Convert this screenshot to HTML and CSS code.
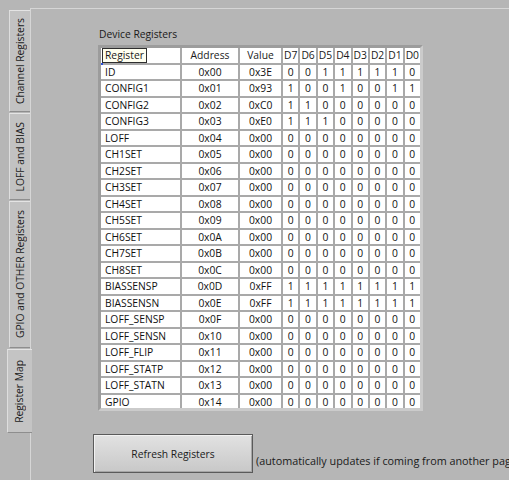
FILE: index.html
```html
<!DOCTYPE html>
<html>
<head>
<meta charset="utf-8">
<link rel="stylesheet" href="styles.css">
</head>
<body>
<div class="app">
  <div class="tabs">
    <div class="tab t1"><span>Channel Registers</span></div>
    <div class="tab t2"><span>LOFF and BIAS</span></div>
    <div class="tab t3"><span>GPIO and OTHER Registers</span></div>
    <div class="tab sel"><span>Register Map</span></div>
  </div>
  <div class="panel">
    <div class="regs">
      <div class="caption">Device Registers</div>
      <div class="frame">
        <div class="grid">
          <div class="c h name first"><span class="edit">Register</span><i class="dot"></i></div><div class="c h">Address</div><div class="c h">Value</div><div class="c h">D7</div><div class="c h">D6</div><div class="c h">D5</div><div class="c h">D4</div><div class="c h">D3</div><div class="c h">D2</div><div class="c h">D1</div><div class="c h">D0</div>
          <div class="c name">ID</div><div class="c">0x00</div><div class="c">0x3E</div><div class="c">0</div><div class="c">0</div><div class="c">1</div><div class="c">1</div><div class="c">1</div><div class="c">1</div><div class="c">1</div><div class="c">0</div>
          <div class="c name">CONFIG1</div><div class="c">0x01</div><div class="c">0x93</div><div class="c">1</div><div class="c">0</div><div class="c">0</div><div class="c">1</div><div class="c">0</div><div class="c">0</div><div class="c">1</div><div class="c">1</div>
          <div class="c name">CONFIG2</div><div class="c">0x02</div><div class="c">0xC0</div><div class="c">1</div><div class="c">1</div><div class="c">0</div><div class="c">0</div><div class="c">0</div><div class="c">0</div><div class="c">0</div><div class="c">0</div>
          <div class="c name">CONFIG3</div><div class="c">0x03</div><div class="c">0xE0</div><div class="c">1</div><div class="c">1</div><div class="c">1</div><div class="c">0</div><div class="c">0</div><div class="c">0</div><div class="c">0</div><div class="c">0</div>
          <div class="c name">LOFF</div><div class="c">0x04</div><div class="c">0x00</div><div class="c">0</div><div class="c">0</div><div class="c">0</div><div class="c">0</div><div class="c">0</div><div class="c">0</div><div class="c">0</div><div class="c">0</div>
          <div class="c name">CH1SET</div><div class="c">0x05</div><div class="c">0x00</div><div class="c">0</div><div class="c">0</div><div class="c">0</div><div class="c">0</div><div class="c">0</div><div class="c">0</div><div class="c">0</div><div class="c">0</div>
          <div class="c name">CH2SET</div><div class="c">0x06</div><div class="c">0x00</div><div class="c">0</div><div class="c">0</div><div class="c">0</div><div class="c">0</div><div class="c">0</div><div class="c">0</div><div class="c">0</div><div class="c">0</div>
          <div class="c name">CH3SET</div><div class="c">0x07</div><div class="c">0x00</div><div class="c">0</div><div class="c">0</div><div class="c">0</div><div class="c">0</div><div class="c">0</div><div class="c">0</div><div class="c">0</div><div class="c">0</div>
          <div class="c name">CH4SET</div><div class="c">0x08</div><div class="c">0x00</div><div class="c">0</div><div class="c">0</div><div class="c">0</div><div class="c">0</div><div class="c">0</div><div class="c">0</div><div class="c">0</div><div class="c">0</div>
          <div class="c name">CH5SET</div><div class="c">0x09</div><div class="c">0x00</div><div class="c">0</div><div class="c">0</div><div class="c">0</div><div class="c">0</div><div class="c">0</div><div class="c">0</div><div class="c">0</div><div class="c">0</div>
          <div class="c name">CH6SET</div><div class="c">0x0A</div><div class="c">0x00</div><div class="c">0</div><div class="c">0</div><div class="c">0</div><div class="c">0</div><div class="c">0</div><div class="c">0</div><div class="c">0</div><div class="c">0</div>
          <div class="c name">CH7SET</div><div class="c">0x0B</div><div class="c">0x00</div><div class="c">0</div><div class="c">0</div><div class="c">0</div><div class="c">0</div><div class="c">0</div><div class="c">0</div><div class="c">0</div><div class="c">0</div>
          <div class="c name">CH8SET</div><div class="c">0x0C</div><div class="c">0x00</div><div class="c">0</div><div class="c">0</div><div class="c">0</div><div class="c">0</div><div class="c">0</div><div class="c">0</div><div class="c">0</div><div class="c">0</div>
          <div class="c name">BIASSENSP</div><div class="c">0x0D</div><div class="c">0xFF</div><div class="c">1</div><div class="c">1</div><div class="c">1</div><div class="c">1</div><div class="c">1</div><div class="c">1</div><div class="c">1</div><div class="c">1</div>
          <div class="c name">BIASSENSN</div><div class="c">0x0E</div><div class="c">0xFF</div><div class="c">1</div><div class="c">1</div><div class="c">1</div><div class="c">1</div><div class="c">1</div><div class="c">1</div><div class="c">1</div><div class="c">1</div>
          <div class="c name">LOFF_SENSP</div><div class="c">0x0F</div><div class="c">0x00</div><div class="c">0</div><div class="c">0</div><div class="c">0</div><div class="c">0</div><div class="c">0</div><div class="c">0</div><div class="c">0</div><div class="c">0</div>
          <div class="c name">LOFF_SENSN</div><div class="c">0x10</div><div class="c">0x00</div><div class="c">0</div><div class="c">0</div><div class="c">0</div><div class="c">0</div><div class="c">0</div><div class="c">0</div><div class="c">0</div><div class="c">0</div>
          <div class="c name">LOFF_FLIP</div><div class="c">0x11</div><div class="c">0x00</div><div class="c">0</div><div class="c">0</div><div class="c">0</div><div class="c">0</div><div class="c">0</div><div class="c">0</div><div class="c">0</div><div class="c">0</div>
          <div class="c name">LOFF_STATP</div><div class="c">0x12</div><div class="c">0x00</div><div class="c">0</div><div class="c">0</div><div class="c">0</div><div class="c">0</div><div class="c">0</div><div class="c">0</div><div class="c">0</div><div class="c">0</div>
          <div class="c name">LOFF_STATN</div><div class="c">0x13</div><div class="c">0x00</div><div class="c">0</div><div class="c">0</div><div class="c">0</div><div class="c">0</div><div class="c">0</div><div class="c">0</div><div class="c">0</div><div class="c">0</div>
          <div class="c name">GPIO</div><div class="c">0x14</div><div class="c">0x00</div><div class="c">0</div><div class="c">0</div><div class="c">0</div><div class="c">0</div><div class="c">0</div><div class="c">0</div><div class="c">0</div><div class="c">0</div>
        </div>
      </div>
    </div>
    <div class="actions">
      <button class="refresh">Refresh Registers</button>
      <span class="note">(automatically updates if coming from another page)</span>
    </div>
  </div>
</div>
</body>
</html>
```
FILE: styles.css
```css
html, body {
  margin: 0;
  padding: 0;
}
body {
  width: 509px;
  height: 480px;
  overflow: hidden;
  background: #b6b6b6;
  font-family: "Open Sans", "Noto Sans", sans-serif;
  font-size: 10.3px;
  color: #111;
}
.app {
  display: flex;
  height: 480px;
}
.tabs {
  width: 30px;
  flex: none;
  padding-top: 10px;
  display: flex;
  flex-direction: column;
  align-items: flex-start;
  gap: 1px;
  box-sizing: border-box;
}
.tab {
  box-sizing: border-box;
  margin-left: 9px;
  width: 21px;
  background: #c2c2c2;
  border-top: 1px solid #e4e4e4;
  border-left: 1px solid #dedede;
  border-bottom: 1px solid #8e8e8e;
  display: flex;
  align-items: center;
  justify-content: center;
  color: #1c1c1c;
}
.tab span {
  writing-mode: vertical-rl;
  transform: rotate(180deg);
  white-space: nowrap;
  line-height: 14px;
}
.t1 { height: 102px; }
.t2 { height: 87px; }
.t3 { height: 147px; }
.tab.sel {
  height: 84px;
  margin-left: 7px;
  width: 25px;
  position: relative;
  z-index: 1;
  background: #c4c4c4;
  padding-right: 3px;
}
.panel {
  flex: 1;
  margin-top: 8px;
  border-top: 1px solid #d6d6d6;
  border-left: 1px solid #d6d6d6;
  padding: 18px 0 0 62px;
  min-width: 0;
}
.caption {
  margin-left: 6px;
  line-height: 14px;
  height: 14px;
  color: #1a1a1a;
  white-space: nowrap;
}
.frame {
  margin: 4px 0 0 5px;
  width: 319px;
  height: 360px;
  border: 3px solid;
  border-color: #9c9c9c #cbcbcb #cbcbcb #9c9c9c;
  overflow: hidden;
}
.grid {
  display: grid;
  grid-template-columns: 79px 56px 41px repeat(8, 1fr);
  grid-auto-rows: 14.5px;
  gap: 2px;
  width: 319px;
  background: #a9a9a9;
}
.c {
  background: #fff;
  line-height: 14.5px;
  text-align: center;
  white-space: nowrap;
  overflow: hidden;
  color: #111;
}
.c.name {
  text-align: left;
  padding-left: 4px;
}
.c.h {
  color: #1a1a1a;
}
.c.first {
  padding-left: 1px;
  position: relative;
  overflow: visible;
}
.edit {
  display: inline-block;
  box-sizing: border-box;
  height: 14.5px;
  line-height: 12.5px;
  padding: 0 2px;
  border: 1px solid #2e2e2e;
  background: #fffff0;
}
.dot {
  position: absolute;
  left: 0;
  bottom: -2px;
  width: 2px;
  height: 2px;
  background: #2b4fd6;
}
.actions {
  margin-top: 23px;
  display: flex;
  align-items: flex-end;
}
.refresh {
  flex: none;
  width: 160px;
  height: 39px;
  padding: 0;
  margin: 0;
  border: 1px solid #5a5a5a;
  background: linear-gradient(#e2e2e2, #c8c8c8);
  box-shadow: inset 1px 1px 0 #f2f2f2, inset -1px -1px 0 #a6a6a6;
  font-family: inherit;
  font-size: 10.3px;
  color: #202020;
}
.note {
  margin-left: 3px;
  margin-bottom: 5px;
  line-height: 14px;
  font-size: 10.8px;
  white-space: nowrap;
  color: #1a1a1a;
}
```
